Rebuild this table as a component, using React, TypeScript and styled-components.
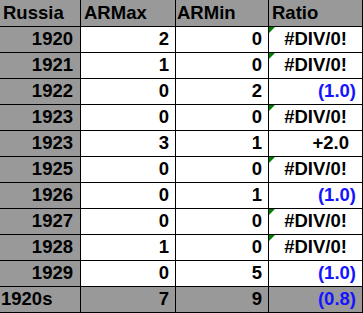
import React from "react";
import styled, { createGlobalStyle } from "styled-components";

const Global = createGlobalStyle`
  html, body { margin: 0; padding: 0; background: #ffffff; }
`;

const Sheet = styled.div`
  display: grid;
  grid-template-columns: 80px 94px 92px 93px;
  grid-template-rows: 26px repeat(11, 25px);
  gap: 1px;
  background: #000000;
  width: max-content;
  padding: 0 1px 1px 0;
  font-family: "Liberation Sans", Arial, sans-serif;
  font-weight: bold;
  font-size: 18.5px;
  color: #000000;
`;

const Cell = styled.div<{ $gray?: boolean; $align?: "left" | "right" | "center"; $blue?: boolean; $pad?: number; $err?: boolean }>`
  position: relative;
  display: flex;
  align-items: center;
  justify-content: ${(p) => (p.$align === "left" ? "flex-start" : p.$align === "center" ? "center" : "flex-end")};
  padding: 0 ${(p) => (p.$pad ?? 6)}px 0 3px;
  background: ${(p) => (p.$gray ? "#999999" : "#ffffff")};
  color: ${(p) => (p.$blue ? "#1414ff" : "#000000")};
  white-space: nowrap;
  overflow: hidden;
  line-height: 1;
`;

const ErrMark = styled.span`
  position: absolute;
  top: 0;
  left: 0;
  width: 0;
  height: 0;
  border-top: 6px solid #008000;
  border-right: 6px solid transparent;
`;

type Row = { year: string; max: number; min: number; ratio: string };

const rows: Row[] = [
  { year: "1920", max: 2, min: 0, ratio: "err" },
  { year: "1921", max: 1, min: 0, ratio: "err" },
  { year: "1922", max: 0, min: 2, ratio: "(1.0)" },
  { year: "1923", max: 0, min: 0, ratio: "err" },
  { year: "1923", max: 3, min: 1, ratio: "+2.0" },
  { year: "1925", max: 0, min: 0, ratio: "err" },
  { year: "1926", max: 0, min: 1, ratio: "(1.0)" },
  { year: "1927", max: 0, min: 0, ratio: "err" },
  { year: "1928", max: 1, min: 0, ratio: "err" },
  { year: "1929", max: 0, min: 5, ratio: "(1.0)" },
];

function RatioCell({ ratio, gray }: { ratio: string; gray?: boolean }) {
  if (ratio === "err") {
    return (
      <Cell $align="center" $pad={3}>
        <ErrMark />
        #DIV/0!
      </Cell>
    );
  }
  const neg = ratio.startsWith("(");
  return (
    <Cell $gray={gray} $blue={neg} $pad={neg ? 6 : 13}>
      {ratio}
    </Cell>
  );
}

export default function App() {
  return (
    <>
      <Global />
      <Sheet>
        <Cell $gray $align="left">Russia</Cell>
        <Cell $gray $align="left" $pad={0}>ARMax</Cell>
        <Cell $gray $align="left" $pad={0} style={{ paddingLeft: 1 }}>ARMin</Cell>
        <Cell $gray $align="left">Ratio</Cell>
        {rows.map((r, i) => (
          <React.Fragment key={i}>
            <Cell $gray $pad={7}>{r.year}</Cell>
            <Cell>{r.max}</Cell>
            <Cell>{r.min}</Cell>
            <RatioCell ratio={r.ratio} />
          </React.Fragment>
        ))}
        <Cell $gray $align="left" $pad={0} style={{ paddingLeft: 1 }}>1920s</Cell>
        <Cell $gray>7</Cell>
        <Cell $gray>9</Cell>
        <RatioCell ratio="(0.8)" gray />
      </Sheet>
    </>
  );
}
